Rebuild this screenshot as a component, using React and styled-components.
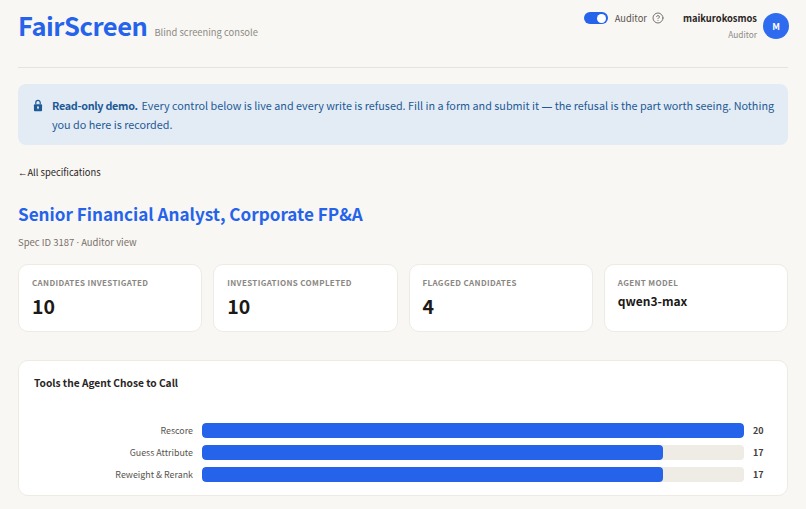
import React, { useState } from "react";
import styled, { createGlobalStyle } from "styled-components";

const GlobalStyle = createGlobalStyle`
  html, body {
    margin: 0;
    padding: 0;
    background: #f9f7f3;
    overflow: hidden;
  }
  body {
    font-family: "Noto Sans CJK SC", "Noto Sans", sans-serif;
    color: #1c1917;
  }
`;

const stats = [
  { label: "Candidates Investigated", value: "10" },
  { label: "Investigations Completed", value: "10" },
  { label: "Flagged Candidates", value: "4" },
  { label: "Agent Model", value: "qwen3-max", small: true },
];

const tools = [
  { name: "Rescore", count: 20 },
  { name: "Guess Attribute", count: 17 },
  { name: "Reweight & Rerank", count: 17 },
];

const App = () => {
  const [auditor, setAuditor] = useState(true);
  const max = Math.max(...tools.map((t) => t.count));

  return (
    <Page>
      <GlobalStyle />
      <Header>
        <Brand>
          <Logo>FairScreen</Logo>
          <Tagline>Blind screening console</Tagline>
        </Brand>
        <HeaderRight>
          <Toggle $on={auditor} onClick={() => setAuditor(!auditor)} aria-label="Auditor mode" />
          <ToggleLabel>Auditor</ToggleLabel>
          <Help viewBox="0 0 24 24" fill="none" stroke="currentColor" strokeWidth="2" strokeLinecap="round" strokeLinejoin="round">
            <circle cx="12" cy="12" r="10" />
            <path d="M9.1 9a3 3 0 0 1 5.8 1c0 2-3 3-3 3" />
            <path d="M12 17h.01" />
          </Help>
          <User>
            <UserName>maikurokosmos</UserName>
            <UserRole>Auditor</UserRole>
          </User>
          <Avatar>M</Avatar>
        </HeaderRight>
      </Header>

      <Banner>
        <LockIcon viewBox="0 0 16 20">
          <path d="M4.5 8V5.2a3.5 3.5 0 0 1 7 0V8" fill="none" stroke="currentColor" strokeWidth="1.9" />
          <rect x="1.5" y="8" width="13" height="11" rx="1.4" fill="currentColor" />
          <circle cx="8" cy="12.6" r="1.6" fill="#e3ecf5" />
          <rect x="7.2" y="13" width="1.6" height="3" fill="#e3ecf5" />
        </LockIcon>
        <BannerText>
          <strong>Read-only demo.</strong> Every control below is live and every write is refused. Fill in a form and submit it <Glyph>—</Glyph> the refusal is the part worth seeing. Nothing you do here is recorded.
        </BannerText>
      </Banner>

      <BackLink href="#"><Arrow>←</Arrow>All specifications</BackLink>

      <Title>Senior Financial Analyst, Corporate FP&amp;A</Title>
      <Meta>Spec ID 3187 <Glyph>·</Glyph> Auditor view</Meta>

      <StatGrid>
        {stats.map((s) => (
          <StatCard key={s.label}>
            <StatLabel>{s.label}</StatLabel>
            <StatValue $small={s.small}>{s.value}</StatValue>
          </StatCard>
        ))}
      </StatGrid>

      <ChartCard>
        <ChartTitle>Tools the Agent Chose to Call</ChartTitle>
        <Rows>
          {tools.map((t) => (
            <Row key={t.name}>
              <RowName>{t.name}</RowName>
              <Track>
                <Fill style={{ width: `${(t.count / max) * 100}%` }} />
              </Track>
              <Count>{t.count}</Count>
            </Row>
          ))}
        </Rows>
      </ChartCard>
    </Page>
  );
};

export default App;

const Page = styled.div`
  padding: 0 18px;
  height: 509px;
  overflow: hidden;
  box-sizing: border-box;
`;

const Glyph = styled.span`
  font-family: "Noto Sans", sans-serif;
`;

const Arrow = styled.span`
  font-family: "Noto Sans", sans-serif;
`;

const Header = styled.header`
  height: 68px;
  box-sizing: border-box;
  border-bottom: 1px solid #e7e3dc;
  display: flex;
  justify-content: space-between;
  align-items: flex-start;
`;

const Brand = styled.div`
  display: flex;
  align-items: baseline;
  gap: 7px;
  padding-top: 7px;
`;

const Logo = styled.div`
  font-size: 25.5px;
  line-height: 36px;
  font-weight: 700;
  letter-spacing: -0.45px;
  color: #2563eb;
`;

const Tagline = styled.div`
  font-size: 9.4px;
  color: #8c8a86;
`;

const HeaderRight = styled.div`
  display: flex;
  align-items: flex-start;
  padding-top: 12px;
  margin-right: -1px;
`;

const Toggle = styled.button`
  width: 24px;
  height: 12px;
  padding: 0;
  border: none;
  border-radius: 6px;
  background: ${(p) => (p.$on ? "#2563eb" : "#d6d3d1")};
  position: relative;
  cursor: pointer;
  &::after {
    content: "";
    position: absolute;
    top: 1.5px;
    left: ${(p) => (p.$on ? "13.5px" : "1.5px")};
    width: 9px;
    height: 9px;
    border-radius: 50%;
    background: #fff;
  }
`;

const ToggleLabel = styled.span`
  font-size: 9.3px;
  line-height: 12px;
  color: #57534e;
  margin-left: 7px;
`;

const Help = styled.svg`
  width: 12px;
  height: 12px;
  margin-left: 5px;
  color: #78716c;
`;

const User = styled.div`
  margin-left: 19px;
  text-align: right;
`;

const UserName = styled.div`
  font-size: 9.4px;
  line-height: 12px;
  font-weight: 700;
  color: #292524;
`;

const UserRole = styled.div`
  font-size: 8.3px;
  line-height: 12px;
  margin-top: 4px;
  color: #8c8a86;
`;

const Avatar = styled.div`
  width: 26px;
  height: 26px;
  margin: 1px 0 0 6px;
  border-radius: 50%;
  background: #2f6bee;
  color: #fff;
  font-size: 9px;
  font-weight: 700;
  display: flex;
  align-items: center;
  justify-content: center;
`;

const Banner = styled.div`
  margin-top: 16px;
  height: 61px;
  box-sizing: border-box;
  padding: 11.5px 10px 11.5px 14px;
  border-radius: 8px;
  background: #e3ecf5;
  color: #1e5a96;
  display: flex;
  gap: 9px;
`;

const LockIcon = styled.svg`
  flex: none;
  width: 10px;
  height: 13px;
  margin-top: 3.5px;
  margin-left: 1px;
  color: #1e5a96;
`;

const BannerText = styled.div`
  font-size: 10.8px;
  line-height: 18px;
  strong {
    letter-spacing: -0.3px;
    margin-right: 1.5px;
  }
`;

const BackLink = styled.a`
  display: block;
  margin-top: 19px;
  font-size: 9.4px;
  line-height: 16px;
  color: #292524;
  text-decoration: none;
`;

const Title = styled.h1`
  margin: 20px 0 0;
  font-size: 17.1px;
  line-height: 26px;
  font-weight: 700;
  color: #2563eb;
`;

const Meta = styled.div`
  margin-top: 7px;
  font-size: 9.5px;
  line-height: 16px;
  color: #78716c;
`;

const StatGrid = styled.div`
  margin-top: 13px;
  display: grid;
  grid-template-columns: repeat(4, 1fr);
  gap: 11px;
`;

const StatCard = styled.div`
  height: 68px;
  box-sizing: border-box;
  padding: 12px 13px;
  background: #fff;
  border: 1px solid #eeebe5;
  border-radius: 10px;
`;

const StatLabel = styled.div`
  font-size: 8px;
  line-height: 12px;
  font-weight: 700;
  letter-spacing: 0.35px;
  text-transform: uppercase;
  color: #8a8783;
`;

const StatValue = styled.div`
  margin-top: ${(p) => (p.$small ? "2px" : "4px")};
  font-size: ${(p) => (p.$small ? "12px" : "19.5px")};
  line-height: ${(p) => (p.$small ? "20px" : "26px")};
  font-weight: 700;
  color: #1c1917;
`;

const ChartCard = styled.section`
  margin-top: 28px;
  height: 136px;
  box-sizing: border-box;
  padding: 14px 15px;
  background: #fff;
  border: 1px solid #eeebe5;
  border-radius: 10px;
`;

const ChartTitle = styled.h2`
  margin: 0;
  font-size: 10.2px;
  line-height: 16px;
  font-weight: 700;
  color: #292524;
`;

const Rows = styled.div`
  margin-top: 32px;
  display: flex;
  flex-direction: column;
  gap: 7px;
`;

const Row = styled.div`
  display: flex;
  align-items: center;
`;

const RowName = styled.div`
  width: 159px;
  flex: none;
  text-align: right;
  font-size: 8.9px;
  color: #57534e;
`;

const Track = styled.div`
  flex: 1;
  height: 15px;
  margin-left: 9px;
  border-radius: 4px;
  background: #efebe5;
  overflow: hidden;
`;

const Fill = styled.div`
  height: 100%;
  border-radius: 4px;
  background: #2563eb;
`;

const Count = styled.div`
  width: 19px;
  margin-left: 9px;
  flex: none;
  font-size: 9px;
  font-weight: 700;
  color: #44403c;
`;
